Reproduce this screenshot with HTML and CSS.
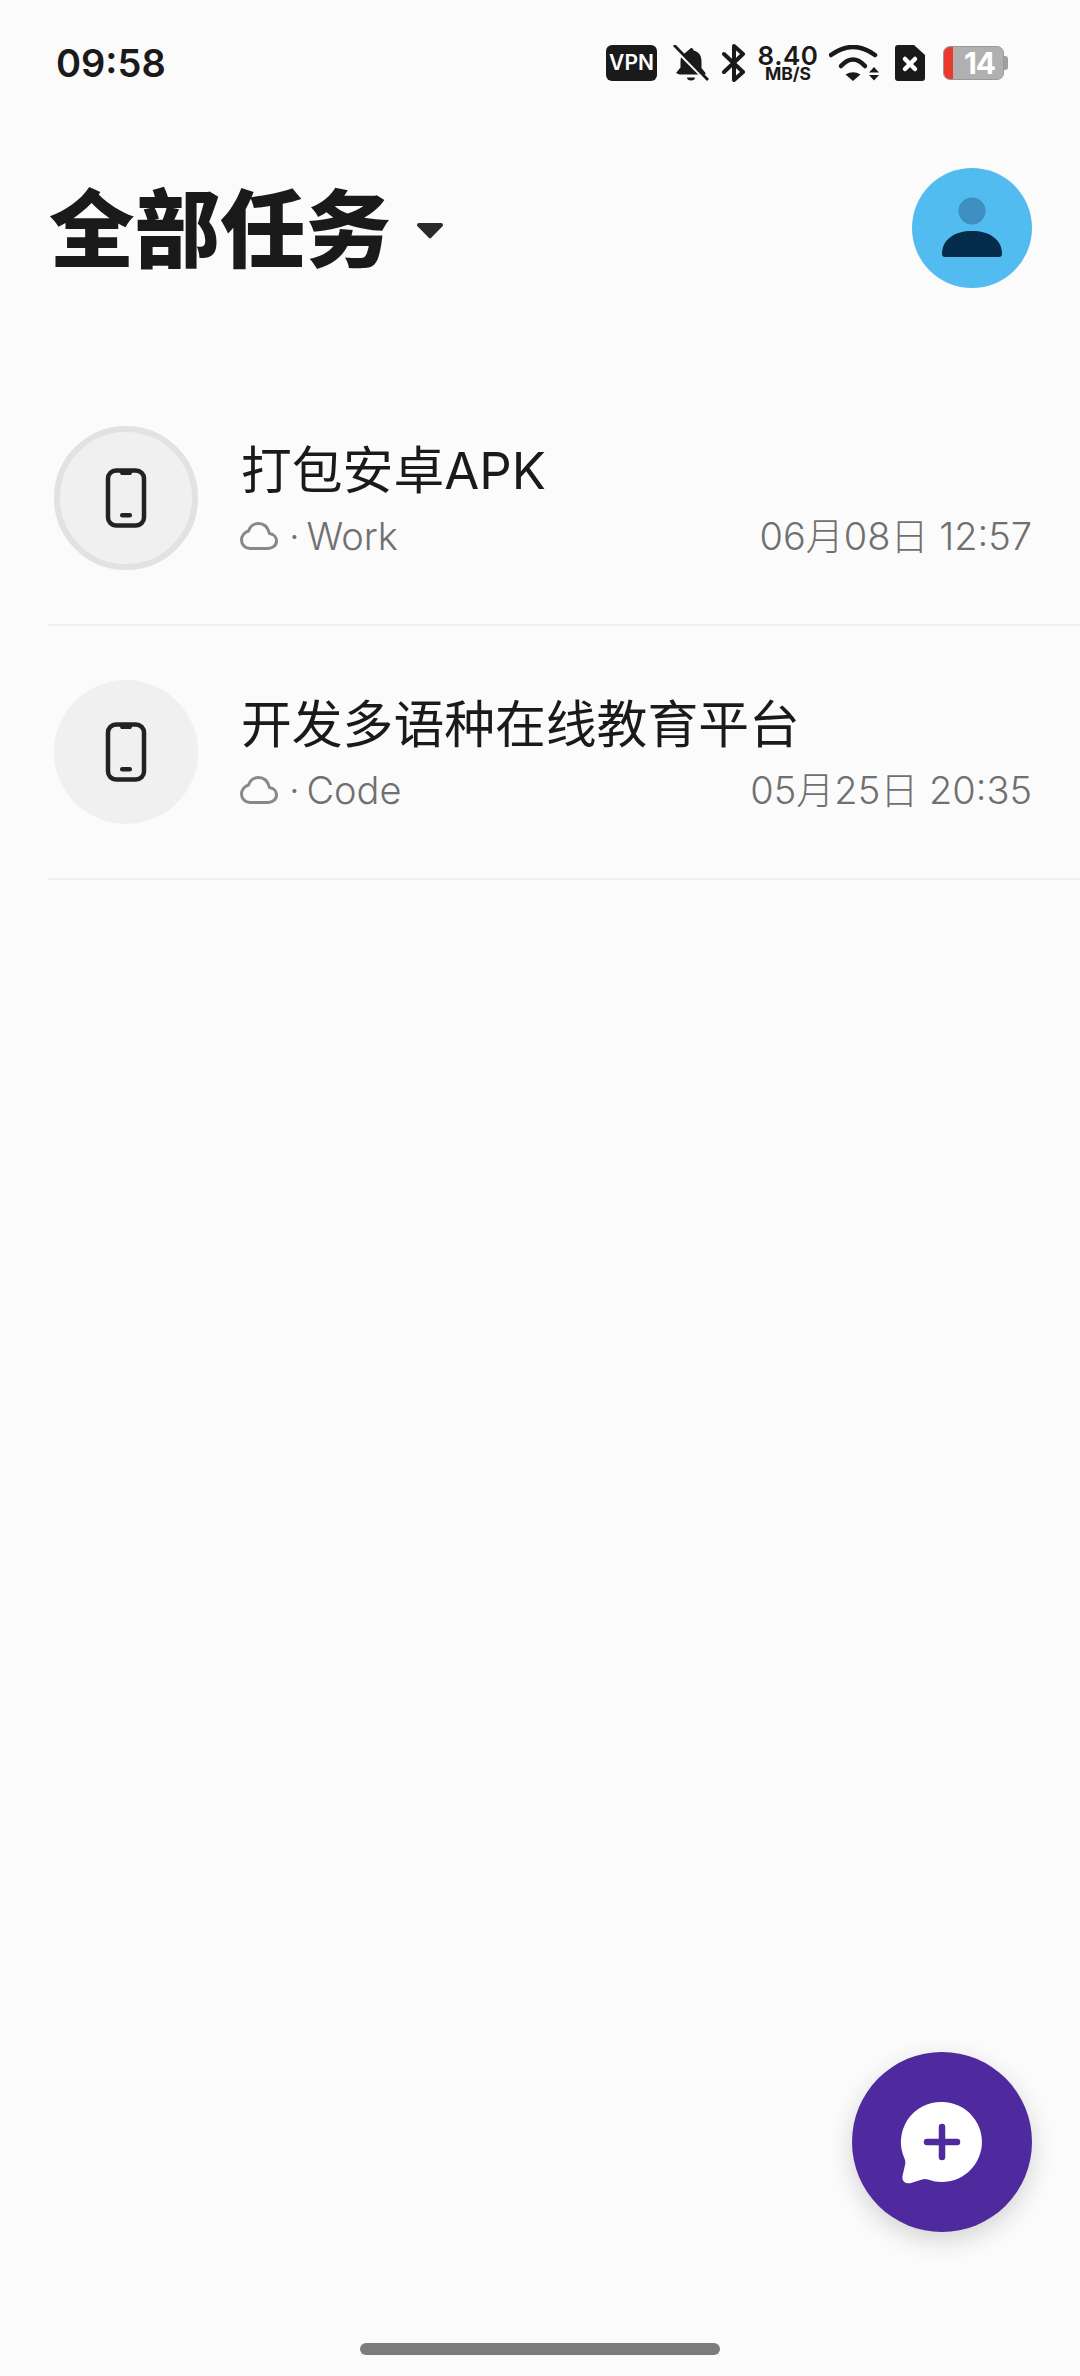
FILE: index.html
```html
<!DOCTYPE html>
<html lang="zh-CN">
<head>
    <meta charset="UTF-8">
    <meta name="viewport" content="width=device-width, initial-scale=1.0">
    <title>全部任务</title>
    <link rel="stylesheet" href="styles.css">
</head>
<body>
    <div class="screen">

        <!-- Status bar -->
        <div class="status-bar">
            <span class="time">09:58</span>
            <div class="status-icons">
                <span class="vpn">VPN</span>
                <svg class="bell" width="36" height="36" viewBox="0 0 36 36">
                    <path d="M18 3a2.500 2.500 0 0 1 2.500 2.500c5.500 1.200 8 5.500 8 10.500v7l4 5v1.500H6.500L3 28l4.500-5.500V16c0-1.800.3-3.500 1-5L18 3z" fill="#1a1a1a"/>
                    <path d="M14 32.500h8a4 3 0 0 1-8 0z" fill="#1a1a1a"/>
                    <path d="M1 2.500l33 33" stroke="#fbfbfb" stroke-width="4"/>
                    <path d="M1 0l34 35" stroke="#1a1a1a" stroke-width="2.800"/>
                </svg>
                <svg class="bluetooth" width="24" height="38" viewBox="0 0 24 38">
                    <path d="M2 10l19 18-9 8V2l9 8L2 28" fill="none" stroke="#1a1a1a" stroke-width="4" stroke-linejoin="round" stroke-linecap="round"/>
                </svg>
                <div class="speed">
                    <span class="speed-num">8.40</span>
                    <span class="speed-unit">MB/S</span>
                </div>
                <svg class="wifi" width="52" height="36" viewBox="0 0 52 36">
                    <path d="M2 10Q24-6 46 10" fill="none" stroke="#1a1a1a" stroke-width="4.500" stroke-linecap="round"/>
                    <path d="M12 21Q24 8 36 21" fill="none" stroke="#1a1a1a" stroke-width="4.500" stroke-linecap="round"/>
                    <path d="M16.500 29.500Q24 25 31.500 29.500L24 36z" fill="#1a1a1a"/>
                    <path d="M40 27.500l5-5.500 5 5.500zM40 30l5 5.500 5-5.500z" fill="#1a1a1a"/>
                </svg>
                <svg class="sim" width="30" height="36" viewBox="0 0 30 36">
                    <path d="M3 0h16l11 10v23a3 3 0 0 1-3 3H3a3 3 0 0 1-3-3V3a3 3 0 0 1 3-3z" fill="#1a1a1a"/>
                    <path d="M10 14l10 10M20 14L10 24" stroke="#fff" stroke-width="4.500" stroke-linecap="round"/>
                </svg>
                <div class="battery">
                    <div class="battery-body">
                        <span class="battery-level"></span>
                        <span class="battery-num">14</span>
                    </div>
                    <span class="battery-tip"></span>
                </div>
            </div>
        </div>

        <!-- Title and avatar -->
        <div class="header">
            <div class="title-wrap">
                <h1>全部任务</h1>
                <svg class="caret" width="28" height="17" viewBox="0 0 28 17">
                    <path d="M3 1h22a2 2 0 0 1 1.500 3.300L15.500 15.500a2 2 0 0 1-3 0L1.500 4.300A2 2 0 0 1 3 1z" fill="#2a2a2a"/>
                </svg>
            </div>
            <svg class="avatar" width="120" height="120" viewBox="0 0 120 120">
                <circle cx="60" cy="60" r="60" fill="#52bcf0"/>
                <circle cx="60" cy="43" r="13.500" fill="#3d8fbf"/>
                <path d="M30 86c0-15 13-23 30-23s30 8 30 23a3 3 0 0 1-3 3H33a3 3 0 0 1-3-3z" fill="#062c4c"/>
            </svg>
        </div>

        <!-- Task list -->
        <div class="task-list">
            <div class="task-row">
                <div class="task-icon selected">
                    <svg class="phone" width="44" height="62" viewBox="0 0 44 62">
                        <rect x="4" y="3.500" width="36" height="55" rx="8" fill="none" stroke="#222" stroke-width="4.500"/>
                        <path d="M15 4h14l-2 4h-10z" fill="#222"/>
                        <rect x="16" y="46" width="12" height="4.500" rx="2.250" fill="#222"/>
                    </svg>
                </div>
                <div class="task-body">
                    <div class="task-name">打包安卓APK</div>
                    <div class="task-meta">
                        <svg class="cloud" width="38" height="28" viewBox="0 0 38 28">
                            <path d="M10 26.500H28c4.500 0 8.500-3 8.500-7.500 0-4-3-7-7-7.500C28 5.500 24 1.500 18.500 1.500c-5 0-8.500 3-10 7.500C4.500 10 1.500 14 1.500 18c0 5 4 8.500 8.500 8.500z" fill="none" stroke="#888" stroke-width="3"/>
                        </svg>
                        <span class="task-tag">· Work</span>
                        <span class="task-date">06月08日 12:57</span>
                    </div>
                </div>
            </div>
            <div class="task-row">
                <div class="task-icon">
                    <svg class="phone" width="44" height="62" viewBox="0 0 44 62">
                        <rect x="4" y="3.500" width="36" height="55" rx="8" fill="none" stroke="#222" stroke-width="4.500"/>
                        <path d="M15 4h14l-2 4h-10z" fill="#222"/>
                        <rect x="16" y="46" width="12" height="4.500" rx="2.250" fill="#222"/>
                    </svg>
                </div>
                <div class="task-body">
                    <div class="task-name">开发多语种在线教育平台</div>
                    <div class="task-meta">
                        <svg class="cloud" width="38" height="28" viewBox="0 0 38 28">
                            <path d="M10 26.500H28c4.500 0 8.500-3 8.500-7.500 0-4-3-7-7-7.500C28 5.500 24 1.500 18.500 1.500c-5 0-8.500 3-10 7.500C4.500 10 1.500 14 1.500 18c0 5 4 8.500 8.500 8.500z" fill="none" stroke="#888" stroke-width="3"/>
                        </svg>
                        <span class="task-tag">· Code</span>
                        <span class="task-date">05月25日 20:35</span>
                    </div>
                </div>
            </div>
        </div>

        <!-- Floating add button -->
        <button class="fab" type="button">
            <svg width="84" height="84" viewBox="0 0 84 84">
                <path d="M42 2a40 40 0 1 1-14 77.500c-2-.7-4-.7-6 0l-11 3.500c-5 1.500-9.500-2-8.500-7l2.500-11c.5-2 .5-4-.3-6A40 40 0 0 1 42 2z" fill="#fff"/>
                <path d="M42 27v30M27 42h30" stroke="#4e2a9e" stroke-width="6.500" stroke-linecap="round"/>
            </svg>
        </button>

        <div class="home-bar"></div>
    </div>
</body>
</html>
```

FILE: styles.css
```css
/* Page */
body {
    margin: 0;
    background: #fbfbfb;
    font-family: 'Inter', 'Noto Sans CJK SC', sans-serif;
}

.screen {
    position: relative;
    width: 1080px;
    height: 2376px;
    overflow: hidden;
}

/* Status bar */
.status-bar {
    height: 126px;
    padding: 0 72px 0 56px;
    display: flex;
    justify-content: space-between;
    align-items: center;
    box-sizing: border-box;
}

.time {
    font-size: 38px;
    font-weight: 600;
    color: #1a1a1a;
}

.status-icons {
    display: flex;
    align-items: center;
}

.vpn {
    width: 51px;
    height: 36px;
    margin-right: 16px;
    border-radius: 6px;
    background: #1a1a1a;
    color: #fff;
    font-size: 21px;
    font-weight: 600;
    line-height: 36px;
    text-align: center;
}

.bell {
    margin-right: 13px;
}

.bluetooth {
    margin-right: 13px;
}

.speed {
    width: 58px;
    height: 36px;
    margin-right: 12px;
    display: flex;
    flex-direction: column;
    align-items: center;
    color: #1a1a1a;
    font-weight: 600;
}

.speed-num {
    font-size: 26px;
    line-height: 21px;
    letter-spacing: 0.5px;
}

.speed-unit {
    font-size: 17.5px;
    line-height: 15px;
    font-weight: 700;
}

.wifi {
    margin-right: 14px;
}

.sim {
    margin-right: 18px;
}

.battery {
    display: flex;
    align-items: center;
}

.battery-body {
    position: relative;
    width: 61px;
    height: 34px;
    border: 1px solid #999999;
    border-radius: 7px;
    background: #b0b0b0;
    box-sizing: border-box;
    overflow: hidden;
    padding-left: 12px;
    text-align: center;
}

.battery-level {
    position: absolute;
    left: 0;
    top: 0;
    bottom: 0;
    width: 9px;
    background: #ea3a2e;
}

.battery-num {
    position: relative;
    color: #fff;
    font-size: 30px;
    font-weight: 700;
    line-height: 32px;
    letter-spacing: -1px;
}

.battery-tip {
    width: 4px;
    height: 14px;
    border-radius: 0 3px 3px 0;
    background: #a0a0a0;
}

/* Header */
.header {
    margin-top: 42px;
    padding: 0 48px 0 49px;
    display: flex;
    justify-content: space-between;
    align-items: flex-start;
}

.title-wrap {
    display: flex;
    align-items: center;
}

h1 {
    margin: 0;
    font-size: 85.5px;
    font-weight: 900;
    line-height: 124px;
    color: #1a1a1a;
}

.caret {
    margin-left: 25px;
}

/* Task list */
.task-list {
    margin: 80px 0 0 48px;
}

.task-row {
    padding: 54px 48px 54px 6px;
    display: flex;
    align-items: center;
    border-bottom: 2px solid #eeeeee;
}

.task-icon {
    width: 144px;
    height: 144px;
    flex-shrink: 0;
    border-radius: 50%;
    background: #f0f0f0;
    box-sizing: border-box;
    display: flex;
    justify-content: center;
    align-items: center;
}

.task-icon.selected {
    border: 6px solid #e2e2e2;
}

.task-body {
    flex: 1;
    margin-left: 43px;
    padding-top: 4px;
}

.task-name {
    font-size: 50.8px;
    line-height: 64px;
    color: #1a1a1a;
}

.task-meta {
    margin-top: 8px;
    display: flex;
    align-items: center;
    color: #707070;
    font-size: 38px;
    font-weight: 300;
    line-height: 50px;
}

.cloud {
    margin: 0 11px 0 -1px;
}

.task-tag {
    word-spacing: -4px;
}

.task-date {
    margin-left: auto;
}

/* Floating button */
.fab {
    position: absolute;
    right: 48px;
    bottom: 144px;
    width: 180px;
    height: 180px;
    padding: 0;
    border: none;
    border-radius: 50%;
    background: #4e2a9e;
    box-shadow: 0 8px 24px rgba(0, 0, 0, 0.16);
    display: flex;
    justify-content: center;
    align-items: center;
}

/* Gesture bar */
.home-bar {
    position: absolute;
    left: 360px;
    bottom: 21px;
    width: 360px;
    height: 12px;
    border-radius: 6px;
    background: #7c7c7c;
}
```
